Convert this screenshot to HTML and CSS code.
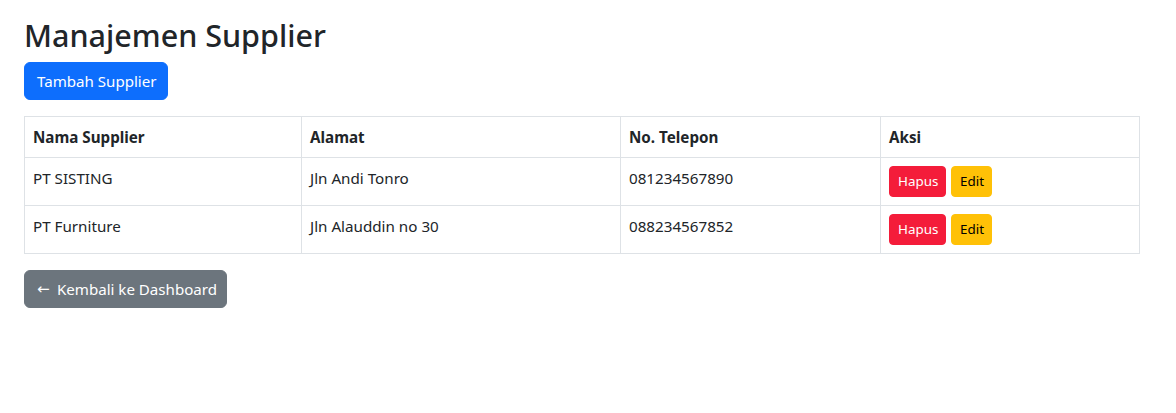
FILE: index.html
```html
<!DOCTYPE html>
<html lang="id">
<head>
<meta charset="utf-8">
<title>Manajemen Supplier</title>
<link rel="stylesheet" href="styles.css">
</head>
<body>
<div class="page">
  <h2 class="title">Manajemen Supplier</h2>
  <a class="btn btn-primary" href="#">Tambah Supplier</a>
  <table class="table">
    <thead>
      <tr>
        <th class="c1">Nama Supplier</th>
        <th class="c2">Alamat</th>
        <th class="c3">No. Telepon</th>
        <th class="c4">Aksi</th>
      </tr>
    </thead>
    <tbody>
      <tr>
        <td>PT SISTING</td>
        <td>Jln Andi Tonro</td>
        <td>081234567890</td>
        <td><div class="actions"><a class="btn-sm btn-danger" href="#">Hapus</a><a class="btn-sm btn-warning" href="#">Edit</a></div></td>
      </tr>
      <tr>
        <td>PT Furniture</td>
        <td>Jln Alauddin no 30</td>
        <td>088234567852</td>
        <td><div class="actions"><a class="btn-sm btn-danger" href="#">Hapus</a><a class="btn-sm btn-warning" href="#">Edit</a></div></td>
      </tr>
    </tbody>
  </table>
  <a class="btn btn-secondary" href="#"><span class="arrow">←</span> Kembali ke Dashboard</a>
</div>
</body>
</html>
```
FILE: styles.css
```css
* { box-sizing: border-box; }
html, body { margin: 0; padding: 0; background: #fff; }
body {
  font-family: "Noto Sans", "Open Sans", sans-serif;
  font-size: 15.2px;
  line-height: 1.5;
  color: #212529;
}
.page {
  padding: 16px 36px 16px 24px;
  display: flex;
  flex-direction: column;
  align-items: flex-start;
}
.title {
  margin: 0 0 8px 0;
  font-size: 30.5px;
  font-weight: 500;
  line-height: 38px;
  height: 38px;
}
.btn {
  display: inline-block;
  height: 38px;
  padding: 6px 12px;
  border: 1px solid transparent;
  border-radius: 6px;
  font-size: 15.1px;
  line-height: 24px;
  color: #fff;
  text-decoration: none;
  white-space: nowrap;
}
.btn-primary { background: #0d6efd; border-color: #0d6efd; width: 144px; }
.btn-secondary { background: #6c757d; border-color: #6c757d; width: 203px; }
.arrow {
  display: inline-block;
  font-family: "DejaVu Sans", sans-serif;
  font-size: 15px;
  width: 16px;
  vertical-align: top;
}
.table {
  width: 100%;
  margin: 16px 0 16px 0;
  border-collapse: collapse;
  border: 1px solid #dee2e6;
}
.table th, .table td {
  border: 1px solid #dee2e6;
  padding: 8px;
  text-align: left;
  vertical-align: top;
  line-height: 24px;
}
.table th { font-weight: 700; }
.c1 { width: 277px; }
.c2 { width: 319px; }
.c3 { width: 260px; }
.actions { display: flex; gap: 5px; }
.btn-sm {
  display: inline-block;
  height: 31px;
  padding: 4px 8px;
  border: 1px solid transparent;
  border-radius: 4px;
  font-size: 13.4px;
  line-height: 21px;
  text-decoration: none;
  white-space: nowrap;
  text-align: center;
}
.btn-danger { background: #f41c3a; border-color: #f41c3a; color: #fff; width: 57px; }
.btn-warning { background: #ffc107; border-color: #ffc107; color: #000; width: 41px; }
```
